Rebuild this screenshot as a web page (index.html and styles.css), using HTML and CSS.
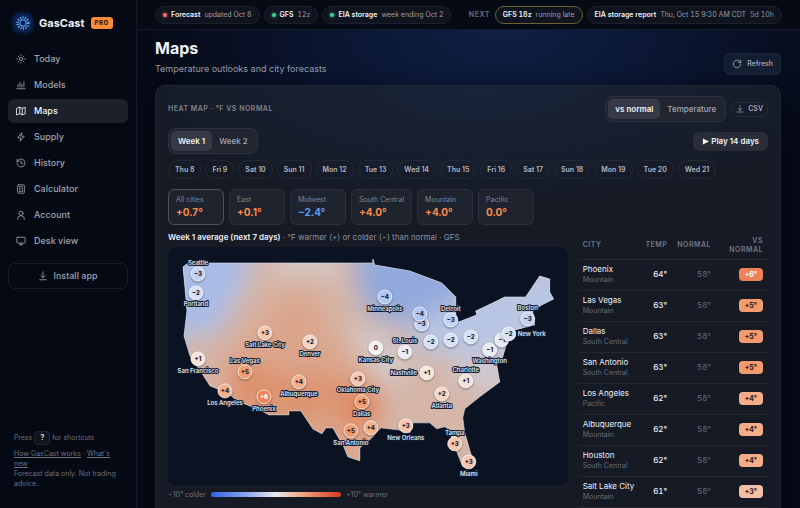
FILE: index.html
```html
<!DOCTYPE html>
<html lang="en">
<head>
<meta charset="utf-8">
<title>GasCast – Maps</title>
<link rel="stylesheet" href="styles.css">
</head>
<body>
<div class="app">
  <aside class="sidebar">
    <div class="brand">
      <svg class="logo" viewBox="0 0 20 20" aria-hidden="true">
        <rect x="1" y="1" width="18" height="18" rx="5" fill="#0d2150"/>
        <circle cx="10" cy="10" r="5" fill="none" stroke="#68b1fb" stroke-width="3.4" stroke-dasharray="1 1.244"/>
        <circle cx="10" cy="10" r="3" fill="none" stroke="#4a8eea" stroke-width="1"/>
      </svg>
      <span class="brand-name">GasCast</span>
      <span class="pro">PRO</span>
    </div>
    <nav class="nav">
      <a href="#"><svg class="icon" viewBox="0 0 24 24"><circle cx="12" cy="12" r="4"/><path d="M12 2v2M12 20v2M4.9 4.9l1.4 1.4M17.7 17.7l1.4 1.4M2 12h2M20 12h2M4.9 19.1l1.4-1.4M17.7 6.3l1.4-1.4"/></svg>Today</a>
      <a href="#"><svg class="icon" viewBox="0 0 24 24"><path d="M2 21h20M5 17v-6M9.500 17V6M14 17v-7M19 17V4"/></svg>Models</a>
      <a href="#" class="active" aria-current="page"><svg class="icon" viewBox="0 0 24 24"><path d="M2 5.500 9 3l6 2.500L22 3v15.500L15 21l-6-2.500L2 21zM9 3v15.500M15 5.500V21"/></svg>Maps</a>
      <a href="#"><svg class="icon" viewBox="0 0 24 24"><path d="M13.500 2 4 14h7l-1 8 10-12h-7.500z"/></svg>Supply</a>
      <a href="#"><svg class="icon" viewBox="0 0 24 24"><path d="M2.500 12a9.500 9.500 0 1 0 3-7L2.500 8M2.500 3v5h5M12 7v5.500l4 2"/></svg>History</a>
      <a href="#"><svg class="icon" viewBox="0 0 24 24"><rect x="4" y="2" width="16" height="20" rx="2"/><path d="M8 6.500h8M8 11h1M12 11h0M15.500 11h.5M8 14.500h.5M12 14.500h0M15.500 14.500v3.500M8 18h4"/></svg>Calculator</a>
      <a href="#"><svg class="icon" viewBox="0 0 24 24"><circle cx="12" cy="8" r="5"/><path d="M3.500 22a8.500 8.500 0 0 1 17 0"/></svg>Account</a>
      <a href="#"><svg class="icon" viewBox="0 0 24 24"><rect x="2" y="3" width="20" height="14" rx="2"/><path d="M8 21h8M12 17v4"/></svg>Desk view</a>
    </nav>
    <button class="install" type="button"><svg class="icon" viewBox="0 0 24 24"><path d="M12 2v14M7 11l5 5 5-5M4 21h16"/></svg>Install app</button>
    <footer class="side-foot">
      <p class="keys">Press <kbd>?</kbd> for shortcuts</p>
      <p><a href="#">How GasCast works</a> · <a href="#">What's new</a><br>Forecast data only. Not trading advice.</p>
    </footer>
  </aside>

  <div class="page">
    <header class="topbar">
      <span class="pill"><i class="dot red"></i><b>Forecast</b><span>updated Oct 8</span></span>
      <span class="pill"><i class="dot"></i><b>GFS</b><span>12z</span></span>
      <span class="pill"><i class="dot"></i><b>EIA storage</b><span>week ending Oct 2</span></span>
      <span class="next">NEXT</span>
      <span class="pill late"><b>GFS 18z</b><span>running late</span></span>
      <span class="pill"><b>EIA storage report</b><span>Thu, Oct 15 9:30 AM CDT</span><span class="dim">5d 10h</span></span>
    </header>

    <main class="content">
      <div class="heading">
        <div>
          <h1>Maps</h1>
          <p>Temperature outlooks and city forecasts</p>
        </div>
        <button class="refresh" type="button"><svg class="icon" viewBox="0 0 24 24"><path d="M21 12a9 9 0 1 1-3-6.700L21 8M21 3v5.500h-5.500"/></svg>Refresh</button>
      </div>

      <section class="card">
        <div class="row">
          <h2>HEAT MAP · °F VS NORMAL</h2>
          <div class="tools">
            <div class="segmented">
              <button type="button" class="on">vs normal</button><button type="button">Temperature</button>
            </div>
            <button class="csv" type="button"><svg class="icon" viewBox="0 0 24 24"><path d="M12 2v14M7 11l5 5 5-5M3 21h18"/></svg>CSV</button>
          </div>
        </div>
        <div class="row weeks">
          <div class="segmented">
            <button type="button" class="on">Week 1</button><button type="button">Week 2</button>
          </div>
          <button class="play" type="button"><svg viewBox="0 0 8 8" aria-hidden="true"><path d="M1 0.500 8 4 1 7.500z"/></svg>Play 14 days</button>
        </div>
        <div class="days">
          <button type="button">Thu 8</button><button type="button">Fri 9</button><button type="button">Sat 10</button><button type="button">Sun 11</button><button type="button">Mon 12</button><button type="button">Tue 13</button><button type="button">Wed 14</button><button type="button">Thu 15</button><button type="button">Fri 16</button><button type="button">Sat 17</button><button type="button">Sun 18</button><button type="button">Mon 19</button><button type="button">Tue 20</button><button type="button">Wed 21</button>
        </div>
        <div class="regions">
          <button type="button" class="on"><span>All cities</span><b>+0.7°</b></button>
          <button type="button"><span>East</span><b>+0.1°</b></button>
          <button type="button"><span>Midwest</span><b class="cold">−2.4°</b></button>
          <button type="button"><span>South Central</span><b>+4.0°</b></button>
          <button type="button"><span>Mountain</span><b>+4.0°</b></button>
          <button type="button"><span>Pacific</span><b>0.0°</b></button>
        </div>

        <div class="split">
          <div class="map-col">
            <p class="caption"><b>Week 1 average (next 7 days)</b> · °F warmer (+) or colder (−) than normal · GFS</p>
            <svg class="map" viewBox="0 0 400 238" role="img" aria-label="Temperature anomaly map">
              <defs>
                <filter id="soft" x="-40%" y="-40%" width="180%" height="180%" color-interpolation-filters="sRGB"><feGaussianBlur stdDeviation="13"/></filter>
                <path id="usa" d="M15 20 20 16H205V12L207 18 242 24 274 36 288 50V72L291 75 309 68 308 64 325 56 337 50H358L372 29 382 32V45L386 52 374 58 365 64 367 78 347 83 339 96 335 110 329 118 332 135 312 150 297 162 295 171 297 186 304 210 300 221 295 220 289 205 284 193 283 184 277 180 269 182 262 176H245L242 186 230 183 213 181 204 191 192 201V214L180 210 176 200 165 181H158L154 187 145 182 133 164H121V168H101L92 163 69 154 60 146 42 139 35 128 22 109 16 89 19 64 17 41Z"/>
                <clipPath id="land"><use href="#usa"/></clipPath>
              </defs>
              <g clip-path="url(#land)">
                <rect width="400" height="238" fill="#d5b6a9"/>
                <g filter="url(#soft)">
                  <path fill="#a9bde8" d="M-40-40H96L76 36 50 84-40 100z"/>
                  <path fill="#dba58c" d="M114 44 146 40 166 92 192 112 214 160 190 230H60L48 120z"/>
                  <path fill="#d4c8c4" d="M100-30H176L170 30H112z"/>
                  <path fill="#92a9dd" d="M192-30H280L300 60 262 82 205 70 188 36z"/>
                  <path fill="#d4cdcf" d="M180 80 206 84 240 105 226 140 206 128z"/>
                  <path fill="#b8c6e4" d="M250 70 300 50 420 0V110L340 106 290 110 245 104z"/>
                  <path fill="#cfccd4" d="M285 115 350 112 345 145 290 138z"/>
                  <path fill="#de855c" d="M68 118 100 126 120 170 72 160z"/>
                  <ellipse cx="194" cy="160" rx="15" ry="24" fill="#e07d52"/>
                  <ellipse cx="130" cy="150" rx="50" ry="24" fill="#dc946f"/>
                </g>
              </g>
              <use href="#usa" fill="none" stroke="#dfe6f5" stroke-opacity=".7" stroke-width=".8"/>
              <g class="pins">
                <g><circle cx="30" cy="27" r="7" fill="#c3d3f5"/><text x="30" y="29">−3</text></g>
                <g><circle cx="28" cy="46" r="7" fill="#d6e0f6"/><text x="28" y="48">−2</text></g>
                <g><circle cx="97" cy="86" r="7" fill="#f6c6b0"/><text x="97" y="88">+3</text></g>
                <g><circle cx="142" cy="95" r="7" fill="#f4d6c9"/><text x="142" y="97">+2</text></g>
                <g><circle cx="30" cy="112" r="7" fill="#f5e4dd"/><text x="30" y="114">+1</text></g>
                <g><circle cx="77" cy="125" r="7" fill="#f39c70"/><text x="77" y="127">+5</text></g>
                <g><circle cx="57" cy="144" r="7" fill="#f4b08d"/><text x="57" y="146">+4</text></g>
                <g class="hot"><circle cx="96" cy="150" r="7" fill="#ee8259"/><text x="96" y="152">+6</text></g>
                <g><circle cx="131" cy="135" r="7" fill="#f4b08d"/><text x="131" y="137">+4</text></g>
                <g><circle cx="190" cy="132" r="7" fill="#f6c6b0"/><text x="190" y="134">+3</text></g>
                <g><circle cx="194" cy="155" r="7" fill="#f39c70"/><text x="194" y="157">+5</text></g>
                <g><circle cx="183" cy="184" r="7" fill="#f39c70"/><text x="183" y="186">+5</text></g>
                <g><circle cx="203" cy="181" r="7" fill="#f4b08d"/><text x="203" y="183">+4</text></g>
                <g><circle cx="208" cy="101" r="7" fill="#f4f3f4"/><text x="208" y="103">0</text></g>
                <g><circle cx="217" cy="50" r="7" fill="#b0c6f7"/><text x="217" y="52">−4</text></g>
                <g><circle cx="254" cy="77" r="7" fill="#c3d3f5"/><text x="254" y="79">−3</text></g>
                <g><circle cx="252" cy="67" r="7" fill="#b0c6f7"/><text x="252" y="69">−4</text></g>
                <g><circle cx="283" cy="73" r="7" fill="#c3d3f5"/><text x="283" y="75">−3</text></g>
                <g><circle cx="263" cy="95" r="7" fill="#d6e0f6"/><text x="263" y="97">−2</text></g>
                <g><circle cx="283" cy="93" r="7" fill="#d6e0f6"/><text x="283" y="95">−2</text></g>
                <g><circle cx="303" cy="90" r="7" fill="#d6e0f6"/><text x="303" y="92">−2</text></g>
                <g><circle cx="237" cy="105" r="7" fill="#e6ebf5"/><text x="237" y="107">−1</text></g>
                <g><circle cx="322" cy="103" r="7" fill="#e6ebf5"/><text x="322" y="105">−1</text></g>
                <g><circle cx="334" cy="93" r="7" fill="#e6ebf5"/><text x="334" y="95">−1</text></g>
                <g><circle cx="341" cy="87" r="7" fill="#d6e0f6"/><text x="341" y="89">−2</text></g>
                <g><circle cx="360" cy="72" r="7" fill="#c3d3f5"/><text x="360" y="74">−3</text></g>
                <g><circle cx="259" cy="126" r="7" fill="#f5e4dd"/><text x="259" y="128">+1</text></g>
                <g><circle cx="298" cy="134" r="7" fill="#f5e4dd"/><text x="298" y="136">+1</text></g>
                <g><circle cx="274" cy="147" r="7" fill="#f4d6c9"/><text x="274" y="149">+2</text></g>
                <g><circle cx="238" cy="179" r="7" fill="#f6c6b0"/><text x="238" y="181">+3</text></g>
                <g><circle cx="287" cy="197" r="7" fill="#f6c6b0"/><text x="287" y="199">+3</text></g>
                <g><circle cx="301" cy="215" r="7" fill="#f6c6b0"/><text x="301" y="217">+3</text></g>
              </g>
              <g class="labels">
                <text x="30" y="18">Seattle</text>
                <text x="28" y="59">Portland</text>
                <text x="97" y="100">Salt Lake City</text>
                <text x="142" y="109">Denver</text>
                <text x="30" y="126">San Francisco</text>
                <text x="77" y="116">Las Vegas</text>
                <text x="57" y="158">Los Angeles</text>
                <text x="96" y="164">Phoenix</text>
                <text x="131" y="149">Albuquerque</text>
                <text x="190" y="145">Oklahoma City</text>
                <text x="194" y="169">Dallas</text>
                <text x="183" y="198">San Antonio</text>
                <text x="208" y="115">Kansas City</text>
                <text x="217" y="64">Minneapolis</text>
                <text x="283" y="64">Detroit</text>
                <text x="237" y="96">St. Louis</text>
                <text x="322" y="116">Washington</text>
                <text x="364" y="89">New York</text>
                <text x="360" y="63">Boston</text>
                <text x="236" y="128">Nashville</text>
                <text x="298" y="125">Charlotte</text>
                <text x="274" y="161">Atlanta</text>
                <text x="238" y="193">New Orleans</text>
                <text x="287" y="188">Tampa</text>
                <text x="301" y="229">Miami</text>
              </g>
            </svg>
            <div class="legend"><span>−10° colder</span><i></i><span>+10° warmer</span></div>
          </div>

          <table class="cities">
            <thead><tr><th>CITY</th><th>TEMP</th><th>NORMAL</th><th>VS NORMAL</th></tr></thead>
            <tbody>
              <tr><td>Phoenix<small>Mountain</small></td><td>64°</td><td>58°</td><td><span class="delta d6">+6°</span></td></tr>
              <tr><td>Las Vegas<small>Mountain</small></td><td>63°</td><td>58°</td><td><span class="delta d5">+5°</span></td></tr>
              <tr><td>Dallas<small>South Central</small></td><td>63°</td><td>58°</td><td><span class="delta d5">+5°</span></td></tr>
              <tr><td>San Antonio<small>South Central</small></td><td>63°</td><td>58°</td><td><span class="delta d5">+5°</span></td></tr>
              <tr><td>Los Angeles<small>Pacific</small></td><td>62°</td><td>58°</td><td><span class="delta d4">+4°</span></td></tr>
              <tr><td>Albuquerque<small>Mountain</small></td><td>62°</td><td>58°</td><td><span class="delta d4">+4°</span></td></tr>
              <tr><td>Houston<small>South Central</small></td><td>62°</td><td>58°</td><td><span class="delta d4">+4°</span></td></tr>
              <tr><td>Salt Lake City<small>Mountain</small></td><td>61°</td><td>58°</td><td><span class="delta d3">+3°</span></td></tr>
            </tbody>
          </table>
        </div>
      </section>
    </main>
  </div>
</div>
</body>
</html>
```
FILE: styles.css
```css
* { box-sizing: border-box; margin: 0; }
body {
  background: #060a16;
  color: #eef1f6;
  font: 8px/12px Inter, "Liberation Sans", sans-serif;
}
button { font: inherit; color: inherit; background: none; border: 0; padding: 0; cursor: pointer; }
a { color: inherit; }
.app { display: grid; grid-template-columns: 137px minmax(0, 1fr); height: 100vh; overflow: hidden; }
.icon { width: 10px; height: 10px; flex: none; fill: none; stroke: currentColor; stroke-width: 2; stroke-linecap: round; stroke-linejoin: round; }

/* Sidebar */
.sidebar { display: flex; flex-direction: column; padding: 13px 8px 19px; border-right: 1px solid #131824; background: #050914; }
.brand { display: flex; align-items: center; gap: 6px; padding: 0 5px; margin-bottom: 14px; }
.logo { width: 20px; height: 20px; filter: drop-shadow(0 0 2px #12357c); }
.brand-name { font-size: 11px; font-weight: 700; line-height: 20px; }
.pro { background: #f98b3e; color: #3a1a05; font-size: 6px; font-weight: 800; letter-spacing: .5px; line-height: 12px; padding: 0 4px; border-radius: 3px; }
.nav { display: flex; flex-direction: column; gap: 2px; }
.nav a { display: flex; align-items: center; gap: 8px; height: 24px; padding: 0 8px; border-radius: 6px; color: #9fa4ae; font-size: 9px; font-weight: 500; text-decoration: none; }
.nav .active { background: #1c202b; color: #f3f5f9; }
.install { display: flex; align-items: center; justify-content: center; gap: 5px; height: 26px; margin-top: 10px; border: 1px solid #171c28; border-radius: 7px; color: #9fa4ae; font-size: 9px; font-weight: 500; }
.side-foot { margin-top: auto; padding: 0 6px; color: #6a707c; font-size: 7px; line-height: 10px; }
.keys { margin-bottom: 4px; }
kbd { display: inline-block; font: 600 7px/12px Inter, sans-serif; color: #e5e8ee; background: #10141f; border: 1px solid #222734; border-radius: 4px; padding: 0 5px; }

/* Top bar */
.page { display: flex; flex-direction: column; min-width: 0; height: 100vh; background: radial-gradient(ellipse 360px 230px at 55% 20px, #0f2144, #0a1530 50%, #060a16); }
.topbar { display: flex; align-items: center; gap: 4px; flex: none; height: 30px; padding: 0 18px; border-bottom: 1px solid #151b28; background: #060a15; font-size: 7px; white-space: nowrap; }
.pill { display: flex; align-items: center; gap: 4px; height: 18px; padding: 0 7px; border: 1px solid #1b202c; border-radius: 9px; background: #10141f; color: #979da9; font-variant-numeric: tabular-nums; }
.pill b { color: #eef1f6; font-weight: 600; }
.dot { width: 4px; height: 4px; border-radius: 50%; background: #34d399; box-shadow: 0 0 3px #34d399; }
.dot.red { background: #f87171; box-shadow: 0 0 3px #f87171; }
.next { margin-left: auto; padding-right: 1px; color: #6a707c; font-size: 7px; font-weight: 600; letter-spacing: .5px; }
.late { border-color: #6b622f; }
.dim { color: #8a909c; }

/* Heading */
.content { flex: 1; min-height: 0; padding: 8px 19px 0 18px; overflow-y: auto; scrollbar-width: none; }
.heading { display: flex; justify-content: space-between; align-items: flex-end; margin-bottom: 10px; }
h1 { font-size: 16px; line-height: 20px; font-weight: 700; }
.heading p { margin: 5px 0 0; color: #959ba8; font-size: 9px; }
.refresh { display: flex; align-items: center; gap: 5px; height: 22px; padding: 0 7px; border: 1px solid #1f2a40; border-radius: 6px; background: #141e32; color: #a4abb8; font-size: 7px; font-weight: 500; }

/* Card */
.card { padding: 10px 12px 24px; border: 1px solid #202737; border-radius: 10px; background: radial-gradient(ellipse 360px 120px at 52% 0, #19243a, #151a25); box-shadow: 0 8px 20px #03060e; }
.row { display: flex; align-items: center; justify-content: space-between; }
.weeks { margin-top: 6px; }
h2 { color: #7e8490; font-size: 7px; font-weight: 600; letter-spacing: .5px; }
.tools { display: flex; align-items: center; gap: 5px; }
.segmented { display: flex; padding: 2px; border: 1px solid #2a3040; border-radius: 7px; background: #20252f; }
.segmented button { height: 20px; padding: 0 7px; border-radius: 5px; color: #a4a9b4; font-weight: 500; }
.segmented .on { background: #353a46; color: #f1f3f7; font-weight: 600; }
.csv { display: flex; align-items: center; gap: 4px; height: 15px; padding: 0 4px; border: 1px solid #252b38; border-radius: 5px; color: #a4a9b4; font-size: 7px; font-weight: 600; }
.csv .icon { width: 8px; height: 8px; }
.play { display: flex; align-items: center; gap: 2px; height: 19px; padding: 0 9px; border-radius: 6px; background: #282d38; color: #f1f3f7; font-weight: 600; }
.play svg { width: 7px; height: 7px; fill: currentColor; }
.days { display: flex; gap: 4px; margin-top: 6px; }
.days button { height: 19px; padding: 0 6px; border: 1px solid #222834; border-radius: 10px; color: #b4b8c1; font-size: 7px; font-weight: 600; white-space: nowrap; }
.regions { display: flex; gap: 5px; margin-top: 10px; }
.regions button { display: flex; flex-direction: column; min-width: 56px; height: 36px; padding: 4px 7px; border: 1px solid #2a2f3b; border-radius: 6px; background: #1f232e; text-align: left; }
.regions .on { border-color: #4b515d; }
.regions span { color: #7e8490; font-size: 7px; line-height: 11px; }
.regions b { color: #f98b4a; font-size: 10px; line-height: 14px; font-weight: 700; }
.regions .cold { color: #5a9df5; }

/* Map and table */
.split { display: grid; grid-template-columns: 21fr 10fr; gap: 10px; align-items: start; margin-top: 6px; }
.caption { color: #8b919d; font-size: 8px; margin-bottom: 4px; white-space: nowrap; }
.caption b { color: #eef1f6; font-weight: 600; }
.map { display: block; width: 100%; border-radius: 8px; background: #0b1322; }
.pins circle { stroke: #fff; stroke-opacity: .8; stroke-width: 1; filter: drop-shadow(0 1px 1px rgba(0, 0, 0, .4)); }
.pins text { fill: #191d28; font-size: 6px; font-weight: 800; text-anchor: middle; }
.pins .hot text { fill: #fff; }
.labels text { fill: #dde4f1; stroke: #111a30; stroke-width: 2; stroke-linejoin: round; paint-order: stroke; font-size: 6px; font-weight: 600; text-anchor: middle; }
.legend { display: flex; align-items: center; gap: 5px; margin-top: 4px; color: #6a707c; font-size: 7px; }
.legend i { width: 130px; height: 5px; border-radius: 3px; background: linear-gradient(90deg, #2f62e8, #8fa8ee 28%, #e9e9ec 50%, #f0a583 70%, #d9371f); }
.cities { width: 100%; border-collapse: collapse; }
.cities th { height: 28px; padding: 0 5px; border-bottom: 1px solid #222732; color: #717784; font-size: 7px; line-height: 9px; font-weight: 600; letter-spacing: .5px; text-align: right; }
.cities td { height: 31px; padding: 0 5px; border-bottom: 1px solid #222732; font-size: 8px; line-height: 11px; text-align: right; font-variant-numeric: tabular-nums; }
.cities th:first-child, .cities td:first-child { text-align: left; white-space: nowrap; }
.cities th:nth-child(2) { width: 30px; }
.cities th:nth-child(3) { width: 42px; }
.cities th:nth-child(4) { width: 52px; }
.cities td:nth-child(2) { font-weight: 500; }
.cities td:nth-child(3) { color: #666c78; }
.cities small { display: block; color: #666c78; font-size: 7px; line-height: 10px; }
.delta { display: inline-block; padding: 0 6px; border-radius: 4px; color: #1d1714; font-size: 7px; font-weight: 700; line-height: 13px; }
.d6 { background: #ed8258; color: #fff; }
.d5 { background: #f39b6e; }
.d4 { background: #f3ad88; }
.d3 { background: #f4c0a5; }
```
